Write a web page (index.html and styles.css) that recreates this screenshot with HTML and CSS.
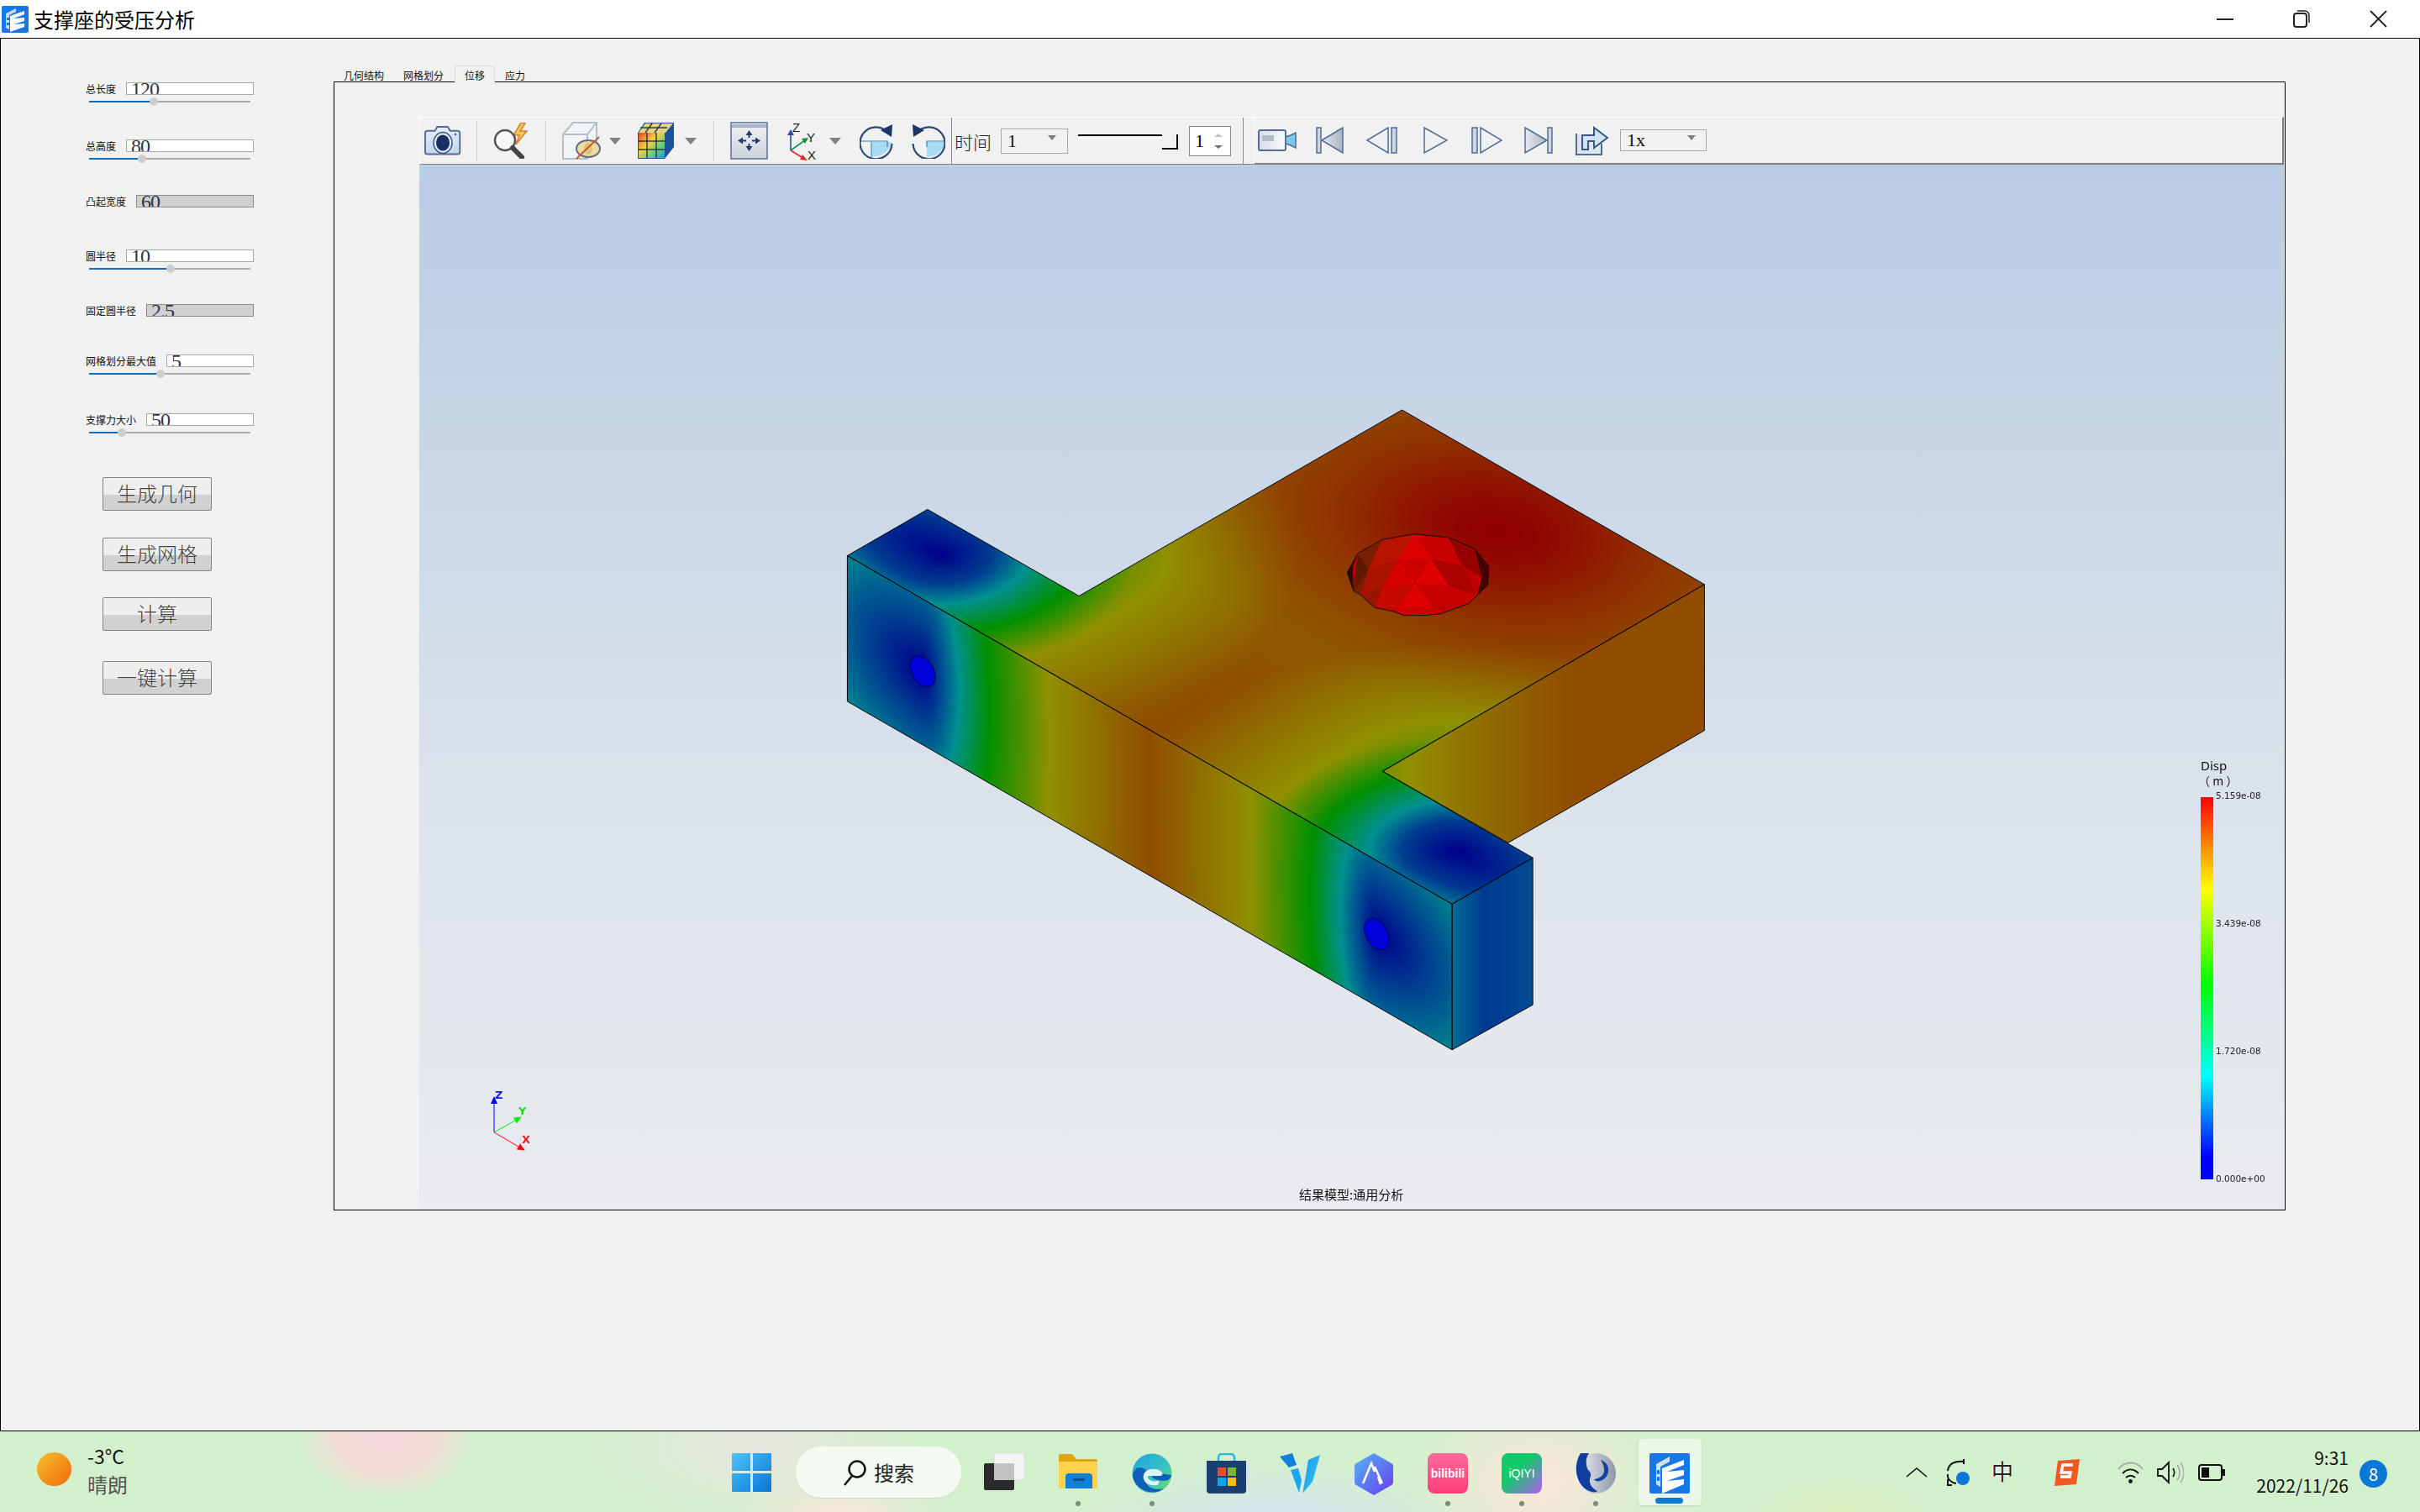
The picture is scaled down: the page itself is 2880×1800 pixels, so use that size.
FILE: index.html
```html
<!DOCTYPE html>
<html lang="zh-CN">
<head>
    <meta charset="UTF-8">
    <title>支撑座的受压分析</title>
    <link rel="stylesheet" href="styles.css">
</head>
<body>
    <!-- Title bar -->
    <header class="titlebar">
        <svg class="app-logo" width="32" height="32" viewBox="0 0 32 32">
            <rect width="32" height="32" rx="2" fill="#1877e6"/>
            <path d="M5 9 17 3v4L9 11v17l-4-2z" fill="#cfd8e4"/>
            <path d="M10 12 27 6v4l-13 5 13-1v4l-13 4 13-1v4l-17 6z" fill="#fff"/>
            <rect x="6" y="14" width="3" height="3" fill="#1877e6"/>
            <rect x="6" y="20" width="3" height="3" fill="#1877e6"/>
        </svg>
        <span class="app-title">支撑座的受压分析</span>
        <div class="win-controls">
            <svg width="20" height="20" viewBox="0 0 20 20"><path d="M0 11h20" stroke="#222" stroke-width="2"/></svg>
            <svg width="20" height="22" viewBox="0 0 20 22"><rect x="1" y="5" width="15" height="16" rx="3" fill="none" stroke="#222" stroke-width="2"/><path d="M5 2h9a5 5 0 0 1 5 5v9" fill="none" stroke="#222" stroke-width="1.5"/></svg>
            <svg width="21" height="21" viewBox="0 0 21 21"><path d="M1 1l19 19M20 1 1 20" stroke="#222" stroke-width="1.8"/></svg>
        </div>
    </header>

    <main class="window">
        <!-- Parameter panel -->
        <aside class="params">
            <div class="field">
                <div class="field-row"><label>总长度</label><div class="num-box">120</div></div>
                <div class="slider"><div class="slider-fill" style="width: 77px"></div></div>
            </div>
            <div class="field">
                <div class="field-row"><label>总高度</label><div class="num-box">80</div></div>
                <div class="slider"><div class="slider-fill" style="width: 63px"></div></div>
            </div>
            <div class="field">
                <div class="field-row"><label>凸起宽度</label><div class="num-box locked">60</div></div>
            </div>
            <div class="field">
                <div class="field-row"><label>圆半径</label><div class="num-box">10</div></div>
                <div class="slider"><div class="slider-fill" style="width: 97px"></div></div>
            </div>
            <div class="field">
                <div class="field-row"><label>固定圆半径</label><div class="num-box locked">2.5</div></div>
            </div>
            <div class="field">
                <div class="field-row"><label>网格划分最大值</label><div class="num-box">5</div></div>
                <div class="slider"><div class="slider-fill" style="width: 85px"></div></div>
            </div>
            <div class="field">
                <div class="field-row"><label>支撑力大小</label><div class="num-box">50</div></div>
                <div class="slider"><div class="slider-fill" style="width: 39px"></div></div>
            </div>

            <div class="actions">
                <button>生成几何</button>
                <button class="mesh-btn">生成网格</button>
                <button>计算</button>
                <button class="run-all">一键计算</button>
            </div>
        </aside>

        <section class="results">
            <div class="tabs">
                <div class="tab">几何结构</div>
                <div class="tab">网格划分</div>
                <div class="tab active">位移</div>
                <div class="tab">应力</div>
            </div>
            <div class="pane">
                <!-- Toolbar -->
                <div class="toolbar">
                    <svg class="tool tool-camera" width="44" height="37" viewBox="0 0 44 37">
                        <defs><linearGradient id="camBody" x1="0" y1="0" x2="0" y2="1"><stop offset="0" stop-color="#e6edf6"/><stop offset="1" stop-color="#c3d6ec"/></linearGradient></defs>
                        <path d="M3 7h9l3-5h13l3 5h9a3 3 0 0 1 3 3v23a3 3 0 0 1-3 3H3a3 3 0 0 1-3-3V10a3 3 0 0 1 3-3z" transform="translate(1 0) scale(.96)" fill="url(#camBody)" stroke="#4f6d96" stroke-width="2"/>
                        <ellipse cx="22" cy="21" rx="11" ry="12.5" fill="#dfe8f3" stroke="#3b5682" stroke-width="1.5"/>
                        <ellipse cx="22" cy="21" rx="8" ry="9.5" fill="#172f60"/>
                        <circle cx="37" cy="11" r="1.4" fill="#4f6d96"/>
                    </svg>
                    <div class="tool-sep sep-1"></div>
                    <svg class="tool tool-search" width="46" height="43" viewBox="0 0 46 43">
                        <path d="M33 0 24 15h7l-4 11 13-16h-8l6-9z" fill="#f6c25f" stroke="#d9822b" stroke-width="1.5"/>
                        <circle cx="14" cy="21" r="12" fill="#f4f6f8" stroke="#555" stroke-width="2.5"/>
                        <path d="M23 30 34 41" stroke="#444" stroke-width="6" stroke-linecap="round"/>
                    </svg>
                    <div class="tool-sep sep-2"></div>
                    <svg class="tool tool-cube" width="46" height="45" viewBox="0 0 46 45">
                        <path d="M1 15 13 1h28v29L30 44H1z" fill="#f1f3f6" stroke="#b4bdca" stroke-width="2"/>
                        <path d="M1 15h29l11-14M30 15v29" fill="none" stroke="#b4bdca" stroke-width="2"/>
                        <ellipse cx="31" cy="32" rx="14" ry="10" fill="#eedc9d" stroke="#5d6f8c" stroke-width="2"/>
                        <ellipse cx="31" cy="32" rx="5" ry="7" fill="#d9c27a"/>
                        <path d="M17 44 44 18" stroke="#c65a2a" stroke-width="2"/>
                    </svg>
                    <div class="drop-arrow arrow-cube"></div>
                    <svg class="tool tool-rubik" width="43" height="43" viewBox="0 0 43 43">
                        <defs><linearGradient id="rubikFace" x1="0" y1="0" x2="1" y2="1"><stop offset="0" stop-color="#e8402b"/><stop offset=".4" stop-color="#f5d13e"/><stop offset=".7" stop-color="#5fd07a"/><stop offset="1" stop-color="#1f9be0"/></linearGradient></defs>
                        <path d="M0 12 8 0h35v29L32 43H0z" fill="#1c4f9c"/>
                        <path d="M1 12 9 1h33l-9 11z" fill="#e5d380"/>
                        <rect x="1" y="12" width="31" height="30" fill="url(#rubikFace)"/>
                        <path d="M11 12v30M22 12v30M1 22h31M1 32h31M9 12l8-11M20 12l8-11M3 6h32" stroke="#2c3d52" stroke-width="1.5" fill="none"/>
                    </svg>
                    <div class="drop-arrow arrow-rubik"></div>
                    <div class="tool-sep sep-3"></div>
                    <svg class="tool tool-fit" width="45" height="45" viewBox="0 0 45 45">
                        <defs><linearGradient id="fitBg" x1="0" y1="0" x2="0" y2="1"><stop offset="0" stop-color="#f0f1f4"/><stop offset="1" stop-color="#cdd2dc"/></linearGradient></defs>
                        <rect x="1" y="1" width="43" height="43" fill="url(#fitBg)" stroke="#5a6f92" stroke-width="1.5"/>
                        <rect x="2" y="3" width="41" height="4" fill="#a6b5cc"/>
                        <path d="M22.500 14V31M14 22.500H31" stroke="#233c6b" stroke-width="2"/>
                        <path d="M22.500 10l-4 6h8zM22.500 35l-4-6h8zM9 22.500l6-4v8zM36 22.500l-6-4v8z" fill="#233c6b"/>
                        <circle cx="22.500" cy="22.500" r="3.500" fill="#e4e7ec"/>
                    </svg>
                    <svg class="tool tool-axis" width="37" height="46" viewBox="0 0 37 46">
                        <path d="M6 34V12" stroke="#2a4f9c" stroke-width="1.6"/><path d="M2 16 6 9l4 7z" fill="#2a4f9c"/>
                        <path d="M6 34 23 22" stroke="#149446" stroke-width="1.6"/><path d="M19 20l8-1-4 7z" fill="#149446"/>
                        <path d="M6 34 22 44" stroke="#e5262b" stroke-width="1.6"/><path d="M20 39l6 7-9-1z" fill="#e5262b"/>
                        <text x="8" y="12" class="axis-letter">Z</text>
                        <text x="25" y="24" class="axis-letter">Y</text>
                        <text x="26" y="45" class="axis-letter">X</text>
                    </svg>
                    <div class="drop-arrow arrow-axis"></div>
                    <svg class="tool tool-rot-a" width="40" height="42" viewBox="0 0 40 42">
                        <path d="M14 22H38C37 32 27 40 14 39.500z" fill="#a8dcf5"/>
                        <path d="M1 21H33V28" fill="none" stroke="#3a7fb0" stroke-width="1.2"/>
                        <path d="M14 22V40" stroke="#3a7fb0" stroke-width="1"/>
                        <path d="M34 11A19 19 0 1 0 38.500 24" fill="none" stroke="#2c4a75" stroke-width="2.2"/>
                        <path d="M39 1 38 16 25 8z" fill="#1b3666"/>
                    </svg>
                    <svg class="tool tool-rot-b" width="40" height="42" viewBox="0 0 40 42">
                        <path d="M18 22H39C38 32 30 40 18 40z" fill="#a8dcf5"/>
                        <path d="M18 28V21H40" fill="none" stroke="#3a7fb0" stroke-width="1.2"/>
                        <path d="M6 11A19 19 0 1 1 1.500 24" fill="none" stroke="#2c4a75" stroke-width="2.2"/>
                        <path d="M1 1 2 16 15 8z" fill="#1b3666"/>
                    </svg>
                    <div class="tool-sep dark sep-4"></div>
                    <span class="time-label">时间</span>
                    <div class="combo combo-time"><span>1</span><i class="drop-arrow small"></i></div>
                    <div class="time-slider"><div class="time-line"></div><div class="time-handle"></div></div>
                    <div class="spin"><span>1</span><div class="spin-arrows"><i class="up"></i><i class="down"></i></div></div>
                    <div class="tool-sep dark sep-5"></div>
                    <div class="player">
                        <svg width="46" height="26" viewBox="0 0 46 26">
                            <defs><linearGradient id="camCase" x1="0" y1="0" x2="1" y2="0"><stop offset="0" stop-color="#d8dee8"/><stop offset="1" stop-color="#f7f9fb"/></linearGradient></defs>
                            <rect x="1" y="1" width="32" height="24" rx="2" fill="url(#camCase)" stroke="#4f6d96" stroke-width="2"/>
                            <rect x="5" y="7" width="14" height="7" fill="#b4bcc8"/>
                            <path d="M33 9l6-2 6-3v18l-6-3-6-2z" fill="#7fc5ea" stroke="#4f6d96" stroke-width="1.5"/>
                        </svg>
                        <svg class="play-first" width="33" height="32" viewBox="0 0 33 32">
                            <defs><linearGradient id="playFill" x1="0" y1="0" x2="1" y2="0"><stop offset="0" stop-color="#e6e9ef"/><stop offset="1" stop-color="#aab3c2"/></linearGradient></defs>
                            <rect x="1" y="1" width="5" height="30" fill="#cfd5df" stroke="#4f6d96" stroke-width="1.5"/>
                            <path d="M7 16 32 1v30z" fill="url(#playFill)" stroke="#4f6d96" stroke-width="1.5"/>
                        </svg>
                        <svg class="play-back" width="37" height="32" viewBox="0 0 37 32">
                            <path d="M1 16 26 1v30z" fill="#eef0f4" stroke="#4f6d96" stroke-width="1.5"/>
                            <rect x="30" y="1" width="6" height="30" fill="#cfd5df" stroke="#4f6d96" stroke-width="1.5"/>
                        </svg>
                        <svg class="play-start" width="29" height="32" viewBox="0 0 29 32">
                            <path d="M1 1 28 16 1 31z" fill="#eef0f4" stroke="#4f6d96" stroke-width="1.5"/>
                        </svg>
                        <svg class="play-fwd" width="37" height="32" viewBox="0 0 37 32">
                            <rect x="1" y="1" width="6" height="30" fill="#cfd5df" stroke="#4f6d96" stroke-width="1.5"/>
                            <path d="M11 1 36 16 11 31z" fill="#eef0f4" stroke="#4f6d96" stroke-width="1.5"/>
                        </svg>
                        <svg class="play-last" width="35" height="32" viewBox="0 0 35 32">
                            <path d="M1 1 27 16 1 31z" fill="url(#playFill)" stroke="#4f6d96" stroke-width="1.5"/>
                            <rect x="28" y="1" width="5" height="30" fill="#cfd5df" stroke="#4f6d96" stroke-width="1.5"/>
                        </svg>
                        <svg class="play-export" width="41" height="36" viewBox="0 0 41 36">
                            <path d="M2 10v25h30V22" fill="#dfe5ee" stroke="#4f6d96" stroke-width="2"/>
                            <path d="M9 29V12h14V3l16 12-16 12v-8h-7v10z" fill="#cfe6f7" stroke="#3b5682" stroke-width="2"/>
                        </svg>
                        <div class="combo combo-speed"><span>1x</span><i class="drop-arrow small"></i></div>
                    </div>
                </div>

                <!-- 3D view -->
                <div class="viewport">
                    <canvas id="model" width="2219" height="1243"></canvas>
                    <span class="triad triad-z">Z</span>
                    <span class="triad triad-y">Y</span>
                    <span class="triad triad-x">X</span>
                    <div class="legend">
                        <div class="legend-title">Disp</div>
                        <div class="legend-unit">（ m ）</div>
                        <div class="legend-body">
                            <div class="legend-bar"></div>
                            <div class="legend-ticks">
                                <span>5.159e-08</span>
                                <span>3.439e-08</span>
                                <span>1.720e-08</span>
                                <span>0.000e+00</span>
                            </div>
                        </div>
                    </div>
                    <div class="view-caption">结果模型:通用分析</div>
                </div>
            </div>
        </section>
    </main>

    <!-- Windows taskbar -->
    <footer class="taskbar">
        <div class="weather">
            <div class="sun"></div>
            <div class="weather-text">
                <div>-3°C</div>
                <div class="weather-desc">晴朗</div>
            </div>
        </div>

        <div class="apps">
            <svg width="47" height="46" viewBox="0 0 47 46">
                <defs><linearGradient id="winBlue" x1="0" y1="0" x2="1" y2="1"><stop offset="0" stop-color="#4cc4fa"/><stop offset="1" stop-color="#0a74d6"/></linearGradient></defs>
                <path d="M1 0h21v21H0V1a1 1 0 0 1 1-1zM25 0h21a1 1 0 0 1 1 1v20H25zM0 24h22v22H1a1 1 0 0 1-1-1zM25 24h22v21a1 1 0 0 1-1 1H25z" fill="url(#winBlue)"/>
            </svg>
            <div class="search-pill">
                <svg width="29" height="32" viewBox="0 0 29 32"><circle cx="17" cy="12" r="9.500" fill="none" stroke="#111" stroke-width="2.500"/><path d="M11 20 2 31" stroke="#111" stroke-width="2.500"/></svg>
                <span>搜索</span>
            </div>
            <svg class="app-taskview" width="48" height="44" viewBox="0 0 48 44">
                <rect x="12" y="0" width="36" height="32" rx="2" fill="#f4f4f4" stroke="#ddd"/>
                <rect x="0" y="12" width="36" height="32" rx="2" fill="#2b2b2b"/>
                <rect x="12" y="12" width="24" height="20" fill="#c2c2c2"/>
            </svg>
            <div class="app-slot app-explorer">
                <svg width="46" height="42" viewBox="0 0 46 42">
                    <path d="M0 3a2 2 0 0 1 2-2h14l5 6h23a2 2 0 0 1 2 2v6H0z" fill="#e0a512"/>
                    <path d="M0 10h46v30a2 2 0 0 1-2 2H2a2 2 0 0 1-2-2z" fill="#ffd24d"/>
                    <path d="M8 28a4 4 0 0 1 4-4h24a4 4 0 0 1 4 4v14H8z" fill="#0f7fd8"/>
                    <path d="M17 30h14v3H17z" fill="#0b4f8a"/>
                </svg>
                <i class="dot"></i>
            </div>
            <div class="app-slot">
                <svg width="49" height="48" viewBox="0 0 49 48">
                    <defs><linearGradient id="edgeGreen" x1="0" y1="0" x2="1" y2="1"><stop offset="0" stop-color="#1f9fe0"/><stop offset=".6" stop-color="#38c6c0"/><stop offset="1" stop-color="#7ddb55"/></linearGradient></defs>
                    <circle cx="24.500" cy="24" r="24" fill="url(#edgeGreen)"/>
                    <path d="M1 26C2 42 24 54 39 42 28 46 16 40 16 30c0-5 4-8 9-8 6 0 12 3 23 4-1 9-13 8-22 4C14 12 4 14 1 26z" fill="#0f5fb8"/>
                    <path d="M14 27c1-9 16-11 22-5 2 2 2 5-2 5H19c0 6 8 8 14 6l-1 5c-9 2-19-2-18-11z" fill="#dff3f5"/>
                </svg>
                <i class="dot"></i>
            </div>
            <div class="app-slot">
                <svg width="47" height="48" viewBox="0 0 47 48">
                    <path d="M14 10V5a4 4 0 0 1 4-4h11a4 4 0 0 1 4 4v5" fill="none" stroke="#2db3ea" stroke-width="2.500"/>
                    <path d="M0 9h47v35a4 4 0 0 1-4 4H4a4 4 0 0 1-4-4z" fill="#1b3f72"/>
                    <rect x="13" y="17" width="10" height="10" fill="#e8502c"/><rect x="25" y="17" width="10" height="10" fill="#7cb82f"/>
                    <rect x="13" y="29" width="10" height="10" fill="#0ea5e9"/><rect x="25" y="29" width="10" height="10" fill="#fab914"/>
                </svg>
            </div>
            <div class="app-slot">
                <svg width="48" height="48" viewBox="0 0 48 48">
                    <defs><linearGradient id="vBlue" x1="0" y1="0" x2="1" y2="1"><stop offset="0" stop-color="#0f8fe8"/><stop offset="1" stop-color="#45d0ee"/></linearGradient></defs>
                    <path d="M0 4 15 0l5 14-9 3z" fill="#0f7fe0"/>
                    <path d="M13 20l9-2 4 14-3 15z" fill="#1aa6f0"/>
                    <path d="M30 32 34 8l14-6-9 32-12 14z" fill="url(#vBlue)"/>
                </svg>
            </div>
            <div class="app-slot">
                <svg width="46" height="50" viewBox="0 0 46 50">
                    <defs><linearGradient id="mountBg" x1="0" y1="0" x2="1" y2="1"><stop offset="0" stop-color="#53b5f5"/><stop offset="1" stop-color="#6a3cf0"/></linearGradient></defs>
                    <path d="M23 0 44 12a4 4 0 0 1 2 4v18a4 4 0 0 1-2 4L23 50 2 38a4 4 0 0 1-2-4V16a4 4 0 0 1 2-4z" fill="url(#mountBg)"/>
                    <path d="M10 36 20 12l4 10M24 16l9 20M28 28l3 9" fill="none" stroke="#fff" stroke-width="2.500"/>
                </svg>
            </div>
            <div class="app-slot">
                <div class="brand-tile bili"><span>bilibili</span></div>
                <i class="dot"></i>
            </div>
            <div class="app-slot">
                <div class="brand-tile iqiyi"><span>iQIYI</span></div>
                <i class="dot"></i>
            </div>
            <div class="app-slot">
                <svg width="48" height="48" viewBox="0 0 48 48">
                    <defs><linearGradient id="swirlGrey" x1="0" y1="0" x2="1" y2="0"><stop offset="0" stop-color="#f2f4f8"/><stop offset="1" stop-color="#8d96a6"/></linearGradient></defs>
                    <circle cx="24" cy="24" r="24" fill="url(#swirlGrey)"/>
                    <path d="M6 0C-2 12-2 34 14 44c6 3 10 3 12 1-8-4-11-11-8-18 1-5-3-6-4-9-2-6-2-12 2-18z" fill="#0f3e9c"/>
                    <path d="M30 8c12 4 12 18 2 24-4 2-8 2-10-1 8-1 13-6 12-12 0-4-2-8-4-11z" fill="#12419e"/>
                </svg>
                <i class="dot"></i>
            </div>
            <div class="app-slot active">
                <svg width="48" height="48" viewBox="0 0 48 48">
                    <rect width="48" height="48" rx="2" fill="#1877e6"/>
                    <path d="M8 13 24 4v6L13 16v24l-5-3z" fill="#d5dfec"/>
                    <path d="M15 18 41 8v6l-20 8 20-2v6l-20 7 20-2v6l-26 11z" fill="#fff"/>
                    <rect x="9" y="20" width="3" height="5" fill="#1877e6"/>
                    <rect x="9" y="28" width="3" height="5" fill="#1877e6"/>
                </svg>
                <i class="bar"></i>
            </div>
        </div>

        <div class="tray">
            <svg class="tray-chevron" width="26" height="12" viewBox="0 0 26 12"><path d="M1 11 13 1l12 10" fill="none" stroke="#111" stroke-width="1.600"/></svg>
            <svg class="tray-sync" width="30" height="32" viewBox="0 0 30 32">
                <path d="M4 14C5 6 12 2 24 3M23 0v6M14 29C8 28 3 24 4 18M4 24v7h5" fill="none" stroke="#111" stroke-width="2"/>
                <circle cx="22" cy="23" r="8" fill="#0b78d7"/>
            </svg>
            <span class="tray-ime">中</span>
            <svg class="tray-sogou" width="33" height="32" viewBox="0 0 33 32">
                <path d="M6 2 32 0l-4 30-26 2z" fill="#f15a24"/>
                <path d="M24 7H12l-2 9h11l-1 5H9" fill="none" stroke="#fff" stroke-width="3.500"/>
            </svg>
            <svg class="tray-wifi" width="31" height="26" viewBox="0 0 31 26">
                <path d="M1 9c8-10 21-10 29 0" fill="none" stroke="#aaa" stroke-width="2"/>
                <path d="M6 14c6-6 13-6 19 0M10 19c3-3 8-3 11 0" fill="none" stroke="#111" stroke-width="2"/>
                <circle cx="15.500" cy="23.500" r="2.400" fill="#111"/>
            </svg>
            <svg class="tray-sound" width="32" height="28" viewBox="0 0 32 28">
                <path d="M1 10h5l8-8v24l-8-8H1z" fill="none" stroke="#111" stroke-width="1.800"/>
                <path d="M19 9c2 3 2 7 0 10" fill="none" stroke="#111" stroke-width="1.600"/>
                <path d="M24 5c4 5 4 13 0 18M28 2c5 7 5 17 0 24" fill="none" stroke="#aaa" stroke-width="1.500"/>
            </svg>
            <svg class="tray-battery" width="33" height="20" viewBox="0 0 33 20">
                <rect x="1" y="1" width="27" height="18" rx="3" fill="none" stroke="#111" stroke-width="2"/>
                <rect x="4" y="4" width="9" height="12" fill="#111"/>
                <rect x="29" y="6" width="3" height="8" fill="#111"/>
            </svg>
            <div class="clock"><div>9:31</div><div>2022/11/26</div></div>
            <div class="notify">8</div>
        </div>
    </footer>

    <script src="model.js"></script>
</body>
</html>
```

FILE: styles.css
```css
* {
    box-sizing: border-box;
}

html, body {
    margin: 0;
    height: 100%;
}

body {
    width: 2880px;
    height: 1800px;
    display: flex;
    flex-direction: column;
    overflow: hidden;
    font-family: "Noto Sans CJK SC", "Noto Sans", sans-serif;
    background-color: #f1f1f1;
    color: #000;
}

/* Title bar */
.titlebar {
    height: 45px;
    flex: none;
    display: flex;
    align-items: center;
    padding-left: 2px;
    background-color: #fff;
}

.app-logo {
    margin-top: 1px;
}

.app-title {
    margin-left: 6px;
    font-size: 24px;
    line-height: 45px;
}

.win-controls {
    margin-left: auto;
    display: flex;
    align-items: center;
    padding-right: 39px;
    gap: 71px;
    margin-top: -1px;
}

/* Main window */
.window {
    height: 1659px;
    flex: none;
    display: flex;
    border: 1px solid #000;
    background-color: #f1f1f1;
}

.params {
    width: 396px;
    flex: none;
    padding: 52px 0 0 101px;
}

.field {
    width: 200px;
}

.field:nth-child(1) { height: 68px; }
.field:nth-child(2) { height: 66px; }
.field:nth-child(3) { height: 65px; }
.field:nth-child(4) { height: 65px; }
.field:nth-child(5) { height: 60px; }
.field:nth-child(6) { height: 70px; }
.field:nth-child(7) { height: 76px; }

.field-row {
    display: flex;
    align-items: center;
    gap: 12px;
    height: 15px;
}

.field-row label {
    font-size: 12px;
    line-height: 15px;
    white-space: nowrap;
    color: #111;
}

.num-box {
    flex: 1;
    height: 15px;
    padding-left: 5px;
    border: 1px solid #a8a8a8;
    background-color: #fff;
    font-family: "Liberation Serif", serif;
    font-size: 24px;
    letter-spacing: -1px;
    line-height: 14px;
    color: #334;
    overflow: hidden;
}

.num-box.locked {
    border-color: #8c8c8c;
    background-color: #d0d0d0;
}

.slider {
    position: relative;
    width: 192px;
    height: 2px;
    margin: 7px 0 0 4px;
    background-color: #ababab;
}

.slider-fill {
    position: relative;
    height: 2px;
    background-color: #0f6cbd;
}

.slider-fill::after {
    content: "";
    position: absolute;
    right: -5px;
    top: -4px;
    width: 10px;
    height: 10px;
    border-radius: 50%;
    background-color: #cdcdcd;
}

.actions {
    display: flex;
    flex-direction: column;
    gap: 31px;
    padding-left: 20px;
}

.actions button {
    width: 130px;
    height: 40px;
    padding: 0 0 3px;
    border: 1px solid #858585;
    border-radius: 2px;
    background: linear-gradient(#eeeeee 0, #eeeeee 52%, #d1d1d1 52%, #d1d1d1 100%);
    font-family: "Noto Sans CJK SC", sans-serif;
    font-size: 24px;
    font-weight: 300;
    line-height: 34px;
    color: #444;
}

.actions .mesh-btn {
    margin-top: 1px;
}

.actions .run-all {
    margin-top: 5px;
}

/* Tabs and result pane */
.results {
    width: 2323px;
    flex: none;
    margin-top: 32px;
}

.tabs {
    position: relative;
    height: 19px;
    display: flex;
    z-index: 1;
}

.tab {
    padding: 4px 12px 0;
    font-size: 12px;
    line-height: 15px;
    color: #111;
}

.tab:nth-child(2) {
    margin-left: -1px;
}

.tab.active {
    height: 20px;
    margin-left: 1px;
    border: 1px solid #dcdcdc;
    border-bottom: none;
    padding: 3px 11px 0;
    background-color: #f1f1f1;
}

.pane {
    height: 1344px;
    padding: 41px 1px 0 101px;
    border: 1px solid #000;
}

/* Toolbar */
.toolbar {
    height: 57px;
    display: flex;
    align-items: center;
    padding-left: 5px;
    border-top: 1px solid #fff;
    border-left: 1px solid #fff;
    border-bottom: 1px solid #808080;
    background-color: #f1f1f1;
}

.tool {
    flex: none;
}

.axis-letter {
    font-family: "Liberation Sans", sans-serif;
    font-size: 15px;
    fill: #222;
}

.tool-sep {
    width: 1px;
    height: 48px;
    flex: none;
    background-color: #d0d0d0;
}

.tool-sep.dark {
    height: 100%;
    background-color: #8a8a8a;
}

.sep-1 { margin-left: 18px; }
.sep-2 { margin-left: 16px; }
.sep-3 { margin-left: 20px; }
.sep-4 { margin-left: 7px; }
.sep-5 { margin-left: 14px; }

.tool-search { margin-left: 19px; }
.tool-cube { margin-left: 19px; }
.tool-rubik { margin-left: 20px; }
.tool-fit { margin-left: 19px; }
.tool-axis { margin-left: 21px; }
.tool-rot-a { margin-left: 22px; }
.tool-rot-b { margin-left: 22px; }

.drop-arrow {
    width: 0;
    height: 0;
    flex: none;
    border-left: 7px solid transparent;
    border-right: 7px solid transparent;
    border-top: 8px solid #808080;
}

.drop-arrow.small {
    border-left-width: 5px;
    border-right-width: 5px;
    border-top-width: 6px;
}

.arrow-cube { margin-left: 10px; }
.arrow-rubik { margin-left: 13px; }
.arrow-axis { margin-left: 15px; }

.time-label {
    margin-left: 3px;
    flex: none;
    font-size: 22px;
    font-weight: 300;
    line-height: 30px;
    color: #222;
}

.combo {
    height: 30px;
    flex: none;
    display: flex;
    align-items: center;
    justify-content: space-between;
    padding: 0 13px 0 7px;
    border: 1px solid #a8a8a8;
    font-family: "Liberation Serif", serif;
    font-size: 22px;
    color: #111;
}

.combo-time {
    width: 80px;
    margin-left: 11px;
}

.combo-time .drop-arrow {
    margin-bottom: 8px;
}

.combo-speed {
    width: 103px;
    height: 26px;
    margin-left: 13px;
    padding-right: 12px;
}

.combo-speed .drop-arrow {
    margin-bottom: 6px;
}

.time-slider {
    width: 120px;
    height: 22px;
    flex: none;
    margin-left: 12px;
    display: flex;
}

.time-line {
    width: 100px;
    height: 5px;
    margin-top: 3px;
    border-top: 2px solid #000;
    border-bottom: 1px solid #fff;
}

.time-handle {
    width: 19px;
    height: 18px;
    margin-top: 3px;
    border-right: 2px solid #000;
    border-bottom: 2px solid #000;
    box-shadow: inset -1px -1px 0 #fff;
}

.spin {
    width: 50px;
    height: 36px;
    flex: none;
    margin-left: 12px;
    display: flex;
    align-items: center;
    justify-content: space-between;
    padding: 0 9px 0 6px;
    border: 1px solid #8c8c8c;
    background-color: #fff;
    font-family: "Liberation Serif", serif;
    font-size: 22px;
}

.spin-arrows {
    height: 18px;
    display: flex;
    flex-direction: column;
    justify-content: space-between;
}

.spin-arrows i {
    display: block;
    width: 0;
    height: 0;
    border-left: 5px solid transparent;
    border-right: 5px solid transparent;
}

.spin-arrows .up {
    border-bottom: 4px solid #c0c0c0;
}

.spin-arrows .down {
    border-top: 4px solid #707070;
}

.player {
    flex: 1;
    align-self: stretch;
    display: flex;
    align-items: center;
    margin: -1px 0 -1px 12px;
    padding-left: 4px;
    border-top: 1px solid #fff;
    border-left: 1px solid #fff;
    border-bottom: 2px solid #808080;
    border-right: 2px solid #808080;
}

.play-first { margin-left: 23px; }
.play-back { margin-left: 27px; }
.play-start { margin-left: 31px; }
.play-fwd { margin-left: 28px; }
.play-last { margin-left: 26px; }
.play-export { margin-left: 25px; }

/* 3D view */
.viewport {
    position: relative;
    height: 1243px;
    background: linear-gradient(#b9cde4 0%, #cdd9e8 35%, #dde4ec 65%, #e9ebef 100%);
    overflow: hidden;
}

#model {
    display: block;
}

.triad {
    position: absolute;
    font-family: "DejaVu Sans", sans-serif;
    font-size: 13px;
    font-weight: bold;
    line-height: 14px;
}

.triad-z { left: 90px; top: 1101px; color: #1818e0; }
.triad-y { left: 118px; top: 1120px; color: #18e018; }
.triad-x { left: 122px; top: 1154px; color: #f02020; }

.legend {
    position: absolute;
    left: 2120px;
    top: 707px;
}

.legend-title {
    font-family: "Noto Sans", sans-serif;
    font-size: 15px;
    line-height: 16px;
    color: #111;
}

.legend-unit {
    margin-top: 2px;
    font-size: 14px;
    line-height: 16px;
    white-space: nowrap;
    margin-left: -3px;
    color: #111;
}

.legend-body {
    display: flex;
    gap: 3px;
    margin-top: 3px;
}

.legend-bar {
    width: 15px;
    height: 455px;
    margin-top: 9px;
    background: linear-gradient(#ff0000 0%, #ffff00 24%, #00ff00 49%, #00ffff 73%, #0000ff 94%, #0000ff 100%);
}

.legend-ticks {
    height: 470px;
    display: flex;
    flex-direction: column;
    justify-content: space-between;
    font-family: "DejaVu Sans", sans-serif;
    font-size: 10.5px;
    line-height: 14px;
    color: #222;
}

.view-caption {
    position: absolute;
    left: 1047px;
    top: 1218px;
    font-size: 15px;
    line-height: 16px;
    color: #111;
}

/* Taskbar */
.taskbar {
    height: 96px;
    flex: none;
    display: flex;
    background:
        radial-gradient(ellipse 105px 70px at 460px 10px, #f5d9de 0%, #f3dcd6 55%, rgba(240, 225, 210, 0) 100%),
        radial-gradient(ellipse 200px 90px at 900px 20px, #e8e6e0 0%, rgba(232, 230, 224, 0) 100%),
        radial-gradient(ellipse 120px 60px at 1000px 100px, #fbe7dd 0%, rgba(251, 231, 221, 0) 100%),
        radial-gradient(ellipse 230px 80px at 1520px 110px, #d3e3f3 0%, rgba(211, 227, 243, 0) 100%),
        radial-gradient(ellipse 150px 110px at 1830px 60px, #fce6da 0%, rgba(252, 230, 218, 0) 100%),
        radial-gradient(ellipse 110px 50px at 2190px 100px, #dfeec0 0%, rgba(223, 238, 192, 0) 100%),
        #d3f0cd;
}

.weather {
    width: 871px;
    flex: none;
    display: flex;
    align-items: center;
    padding: 0 0 4px 44px;
}

.sun {
    width: 41px;
    height: 40px;
    margin-bottom: 2px;
    border-radius: 50%;
    background: linear-gradient(135deg, #f5c02c, #f4680b);
}

.weather-text {
    margin-left: 19px;
    font-size: 23px;
    line-height: 27px;
    color: #111;
}

.weather-desc {
    margin-top: 6px;
    font-size: 24px;
    color: #555;
}

.apps {
    display: flex;
    align-items: flex-start;
    padding-top: 26px;
}

.search-pill {
    width: 197px;
    height: 61px;
    margin: -8px 0 0 29px;
    display: flex;
    align-items: center;
    padding-left: 56px;
    gap: 8px;
    border-radius: 30px;
    background-color: #f4faf2;
    box-shadow: 0 1px 1px #c9dcc5;
    font-size: 24px;
    color: #222;
}

.app-taskview {
    margin-left: 27px;
}

.app-slot {
    position: relative;
    width: 48px;
    flex: none;
    margin-left: 40px;
    display: flex;
    justify-content: center;
}

.app-slot .dot {
    position: absolute;
    left: 21px;
    top: 57px;
    width: 6px;
    height: 6px;
    border-radius: 50%;
    background-color: #7c8a7c;
}

.app-slot.active::before {
    content: "";
    position: absolute;
    left: -13px;
    top: -17px;
    width: 75px;
    height: 79px;
    border-radius: 4px;
    background-color: #eaf6e8;
    box-shadow: 0 1px 2px #bcd4b8;
}

.app-slot.active svg {
    position: relative;
}

.app-slot .bar {
    position: absolute;
    left: 7px;
    top: 53px;
    width: 33px;
    height: 7px;
    border-radius: 4px;
    background-color: #0b7bd8;
}

.brand-tile {
    width: 48px;
    height: 48px;
    display: flex;
    align-items: center;
    justify-content: center;
    border-radius: 8px;
    font-family: "Liberation Sans", sans-serif;
    font-weight: bold;
    color: #fff;
}

.brand-tile.bili {
    background: linear-gradient(#ff6a9b, #ff3f78);
    font-size: 14px;
}

.brand-tile.iqiyi {
    background: linear-gradient(135deg, #12c96a 40%, #b45cf0);
    font-size: 14px;
    font-weight: normal;
}

.tray {
    flex: 1;
    display: flex;
    align-items: flex-start;
    padding-top: 33px;
    margin-left: 257px;
    min-width: 0;
}

.tray-sync { margin-left: 20px; }
.tray-ime {
    margin: -3px 0 0 26px;
    font-size: 26px;
    line-height: 34px;
    color: #222;
    text-shadow: 0 0 2px #fff, 0 0 2px #fff;
}
.tray-sogou { margin-left: 47px; }
.tray-wifi { margin-left: 44px; margin-top: 3px; }
.tray-sound { margin-left: 16px; margin-top: 2px; }
.tray-battery { margin-left: 17px; margin-top: 6px; }
.tray-chevron { margin-top: 10px; }

.clock {
    width: 146px;
    flex: none;
    margin: -18px 0 0 0;
    font-size: 21px;
    line-height: 33px;
    text-align: right;
    color: #111;
}

.notify {
    width: 33px;
    height: 33px;
    flex: none;
    margin-left: 13px;
    margin-top: 1px;
    border-radius: 50%;
    background-color: #0b78d7;
    font-size: 20px;
    line-height: 33px;
    text-align: center;
    color: #fff;
}
```

FILE: model.js
```js
// Draws the displacement contour of the support onto the viewport canvas.
// Coordinates below are screen pixels, the canvas starts at (499, 196).
const canvas = document.getElementById('model');
const ctx = canvas.getContext('2d');
const OX = 499;
const OY = 196;

const topFace = [[1668.5, 488], [2028.4, 695.7], [1645.4, 918.2], [1824.2, 1021.2], [1728.1, 1076.3], [1008.4, 661.5], [1103.8, 606.4], [1284.1, 709.5]];
const frontFace = [[1008.4, 661.5], [1728.1, 1076.3], [1728.1, 1249.8], [1008.4, 835]];
const endFace = [[1728.1, 1076.3], [1824.2, 1021.2], [1824.2, 1196.2], [1728.1, 1249.8]];
const backFace = [[1645.4, 918.2], [2028.4, 695.7], [2028.4, 869.7], [1794.8, 1003.4]];

// value -> colour, a darkened rainbow
const colorStops = [
    [0, 0, 0, 140], [0.17, 0, 75, 145], [0.33, 0, 144, 144], [0.5, 0, 144, 0],
    [0.67, 144, 144, 0], [0.83, 144, 76, 0], [1, 144, 0, 0]
];

function lerpTable(table, x) {
    if (x <= table[0][0]) return table[0][1];
    for (let i = 1; i < table.length; i++) {
        if (x <= table[i][0]) {
            const k = (x - table[i - 1][0]) / (table[i][0] - table[i - 1][0]);
            return table[i - 1][1] + k * (table[i][1] - table[i - 1][1]);
        }
    }
    return table[table.length - 1][1];
}

function valueToColor(u) {
    for (let i = 1; i < colorStops.length; i++) {
        if (u <= colorStops[i][0]) {
            const a = colorStops[i - 1];
            const b = colorStops[i];
            const k = Math.max(0, (u - a[0]) / (b[0] - a[0]));
            return [a[1] + k * (b[1] - a[1]), a[2] + k * (b[2] - a[2]), a[3] + k * (b[3] - a[3])];
        }
    }
    return colorStops[colorStops.length - 1].slice(1);
}

function inside(poly, x, y) {
    let hit = false;
    for (let i = 0, j = poly.length - 1; i < poly.length; j = i++) {
        const a = poly[i];
        const b = poly[j];
        if ((a[1] > y) !== (b[1] > y) && x < (b[0] - a[0]) * (y - a[1]) / (b[1] - a[1]) + a[0]) hit = !hit;
    }
    return hit;
}

const topProfile = [[0, 0], [0.06, 0.14], [0.1, 0.33], [0.16, 0.5], [0.23, 0.67], [0.42, 0.83]];
const frontProfile = [[0, 0], [0.06, 0.33], [0.11, 0.5], [0.21, 0.67], [0.38, 0.83]];

function topValue(x, y) {
    // s runs along the long edge, t across it
    const dx = x - 1008.4;
    const dy = y - 661.5;
    const det = -79393;
    const s = (dx * -55.1 - 95.8 * dy) / det;
    const t = (719.7 * dy - 414.8 * dx) / det;
    const dt = (t - 0.59) * 0.133;
    const sa = s < 0.075 ? (s - 0.075) * 0.5 : s - 0.075;
    const sb = s > 0.925 ? (s - 0.925) * 0.5 : s - 0.925;
    const d = Math.min(Math.hypot(sa, dt), Math.hypot(sb, dt));
    let u = lerpTable(topProfile, d);
    u -= 0.03 * Math.exp(-Math.pow((t - 1.9) / 0.8, 2));
    const r2 = 0.7 * Math.pow(s - 0.5, 2) + Math.pow((t - 4.3) * 0.133, 2);
    const red = Math.exp(-r2 / (2 * 0.115 * 0.115));
    u = u + (1 - u) * red;
    return Math.max(0, u);
}

function frontValue(x, y) {
    const s = (x - 1008.4) / 719.7;
    const h = (y - 661.5 - 414.8 * s) / 173.5;
    const da = s < 0.125 ? (0.125 - s) * 0.3 : s - 0.125;
    const db = s > 0.875 ? (s - 0.875) * 0.3 : 0.875 - s;
    const dh = (h - 0.5) * 0.08;
    return lerpTable(frontProfile, Math.min(Math.hypot(da, dh), Math.hypot(db, dh)));
}

function endValue(x) {
    return lerpTable([[0, 0.25], [0.4, 0.13], [1, 0.17]], (x - 1728.1) / 96);
}

function backValue(x) {
    return lerpTable([[0, 0.64], [0.3, 0.75], [0.6, 0.83], [1, 0.83]], (x - 1645.4) / 383);
}

function drawFaces() {
    const x0 = 1008;
    const y0 = 488;
    const w = 1022;
    const h = 763;
    const img = ctx.createImageData(w, h);
    for (let j = 0; j < h; j++) {
        for (let i = 0; i < w; i++) {
            const x = x0 + i + 0.5;
            const y = y0 + j + 0.5;
            let u = -1;
            if (inside(topFace, x, y)) u = topValue(x, y);
            else if (inside(frontFace, x, y)) u = frontValue(x, y);
            else if (inside(endFace, x, y)) u = endValue(x);
            else if (inside(backFace, x, y)) u = backValue(x);
            if (u < 0) continue;
            const c = valueToColor(u);
            const p = (j * w + i) * 4;
            img.data[p] = c[0];
            img.data[p + 1] = c[1];
            img.data[p + 2] = c[2];
            img.data[p + 3] = 255;
        }
    }
    ctx.putImageData(img, x0 - OX, y0 - OY);
}

function tracePath(points, close) {
    ctx.beginPath();
    points.forEach((p, i) => {
        if (i === 0) ctx.moveTo(p[0] - OX, p[1] - OY);
        else ctx.lineTo(p[0] - OX, p[1] - OY);
    });
    if (close) ctx.closePath();
}

function drawEdges() {
    ctx.strokeStyle = '#0a0a0a';
    ctx.lineWidth = 1;
    [topFace, frontFace, endFace, backFace].forEach(face => {
        tracePath(face, true);
        ctx.stroke();
    });
}

// Facets of the big hole, taken in a local 3x grid around (1500, 600)
const holeOutline = [[550, 107], [672, 120], [765, 160], [815, 222], [812, 288], [775, 325], [745, 355], [645, 392], [585, 398], [512, 398], [480, 385], [408, 370], [358, 325], [332, 310], [310, 245], [347, 177], [435, 127]];
const holeFacets = [
    ['#be0000', holeOutline],
    ['#b81400', [[435, 127], [550, 107], [490, 200], [385, 235]]],
    ['#c80000', [[672, 120], [720, 220], [610, 197], [550, 107]]],
    ['#960000', [[672, 120], [765, 160], [790, 262], [720, 220]]],
    ['#7a1e00', [[347, 177], [435, 127], [385, 235], [358, 325], [332, 310]]],
    ['#611800', [[347, 177], [385, 235], [332, 310]]],
    ['#2c0c00', [[310, 245], [347, 177], [330, 225], [332, 310]]],
    ['#470000', [[765, 160], [815, 222], [812, 288], [775, 325], [790, 262]]],
    ['#ab0000', [[610, 197], [720, 220], [770, 325], [672, 292]]],
    ['#c80000', [[672, 292], [770, 325], [745, 355], [620, 370], [552, 283]]],
    ['#c60a00', [[435, 300], [552, 283], [490, 372], [408, 370]]],
    ['#a81400', [[385, 235], [490, 205], [435, 300], [358, 325]]],
    ['#cc0000', [[490, 200], [610, 197], [552, 283], [435, 300]]],
    ['#961400', [[358, 325], [435, 300], [408, 370]]],
    ['#cd0000', [[480, 385], [512, 398], [645, 392], [620, 370], [490, 372]]],
    ['#dc0000', [[550, 107], [490, 200], [610, 197]]],
    ['#d60000', [[490, 205], [435, 300], [552, 283]]],
    ['#e00000', [[610, 197], [552, 283], [672, 292]]],
    ['#e00000', [[552, 283], [490, 372], [615, 370]]]
];

function drawHole() {
    const toPage = p => [1500 + p[0] / 3, 600 + p[1] / 3];
    ctx.save();
    tracePath(holeOutline.map(toPage), true);
    ctx.clip();
    holeFacets.forEach(f => {
        ctx.fillStyle = f[0];
        tracePath(f[1].map(toPage), true);
        ctx.fill();
    });
    ctx.restore();
    ctx.strokeStyle = '#111';
    ctx.lineWidth = 1;
    tracePath(holeOutline.map(toPage), true);
    ctx.stroke();
}

function drawPin(x, y) {
    ctx.beginPath();
    ctx.ellipse(x - OX, y - OY, 13, 20, -0.5, 0, Math.PI * 2);
    ctx.fillStyle = '#0000d8';
    ctx.fill();
    ctx.strokeStyle = '#06063a';
    ctx.stroke();
}

function drawArrow(color, x1, y1, x2, y2) {
    ctx.strokeStyle = color;
    ctx.fillStyle = color;
    ctx.lineWidth = 1;
    tracePath([[x1, y1], [x2, y2]]);
    ctx.stroke();
    const a = Math.atan2(y2 - y1, x2 - x1);
    const tip = [x2 + 9 * Math.cos(a), y2 + 9 * Math.sin(a)];
    const side = [Math.cos(a + Math.PI / 2) * 4, Math.sin(a + Math.PI / 2) * 4];
    tracePath([tip, [x2 + side[0], y2 + side[1]], [x2 - side[0], y2 - side[1]]], true);
    ctx.fill();
}

function drawTriad() {
    drawArrow('#0000ff', 588, 1348, 588, 1314);
    drawArrow('#00f000', 588, 1348, 613, 1334);
    drawArrow('#ff0000', 588, 1348, 617, 1365);
}

drawFaces();
drawEdges();
drawHole();
drawPin(1098.2, 799.3);
drawPin(1638.4, 1112);
drawTriad();
```
